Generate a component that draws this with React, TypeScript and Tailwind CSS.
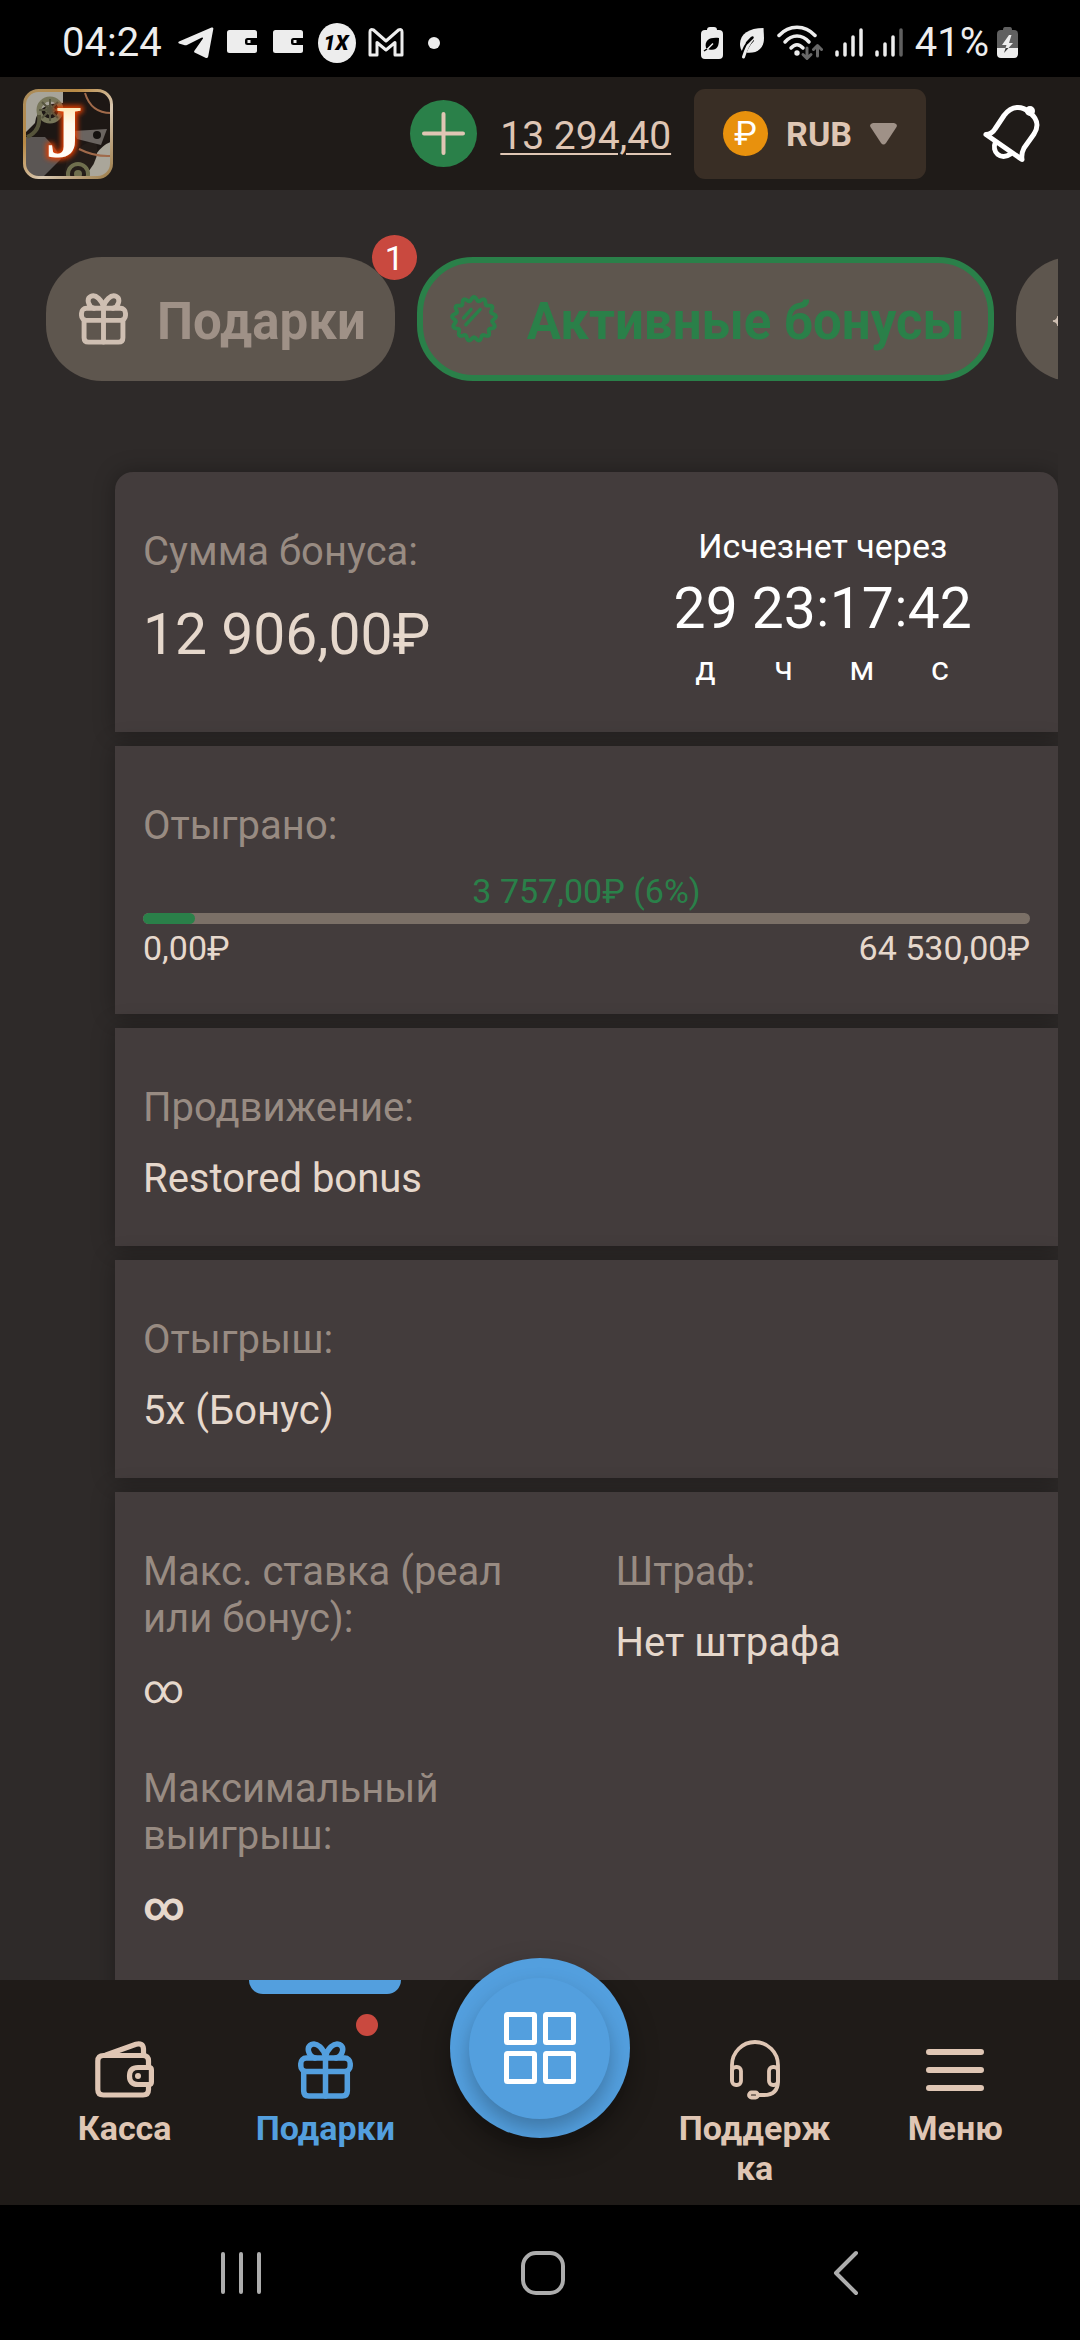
import type { ReactNode } from "react";

function scallopPath(lobes: number, radius: number, depth: number, center: number) {
  const points: string[] = [];
  const steps = 260;
  for (let i = 0; i < steps; i++) {
    const angle = (i / steps) * Math.PI * 2 - Math.PI / 2;
    const r = radius + depth * Math.cos(lobes * (angle + Math.PI / 2));
    points.push(`${(center + r * Math.cos(angle)).toFixed(2)} ${(center + r * Math.sin(angle)).toFixed(2)}`);
  }
  return `M${points.join("L")}Z`;
}

const SCALLOP = scallopPath(13, 21, 2, 25);

function TelegramIcon() {
  return (
    <svg width="36" height="36" viewBox="0 0 36 36" fill="#ededed" aria-hidden="true">
      <path d="M1 16.5 33.5 2.6Q35.6 2 35.3 4L30.2 31.5Q29.5 34 27 32.6L16.6 27.6Q15.6 26.8 16.6 25.6L25 13.6Q25.3 12 23.4 12.8L9 20Q7.6 20.6 6 20L1 18.4Q-.4 17.4 1 16.5Z" />
    </svg>
  );
}

function WalletNoticeIcon() {
  return (
    <svg width="34" height="36" viewBox="0 0 34 36" aria-hidden="true">
      <rect x="1" y="5" width="30" height="23" rx="2.5" fill="#ededed" />
      <rect x="19" y="13" width="15" height="7" rx="2.5" fill="#000" />
      <rect x="21.5" y="15" width="3" height="3" fill="#ededed" />
    </svg>
  );
}

function OneXIcon() {
  return (
    <svg width="38" height="40" viewBox="0 0 38 40" aria-hidden="true">
      <ellipse cx="19" cy="20" rx="19" ry="20" fill="#ededed" />
      <text x="18" y="27" textAnchor="middle" fontFamily="Roboto, sans-serif" fontSize="21" fontWeight="900" fontStyle="italic" fill="#000">
        1X
      </text>
    </svg>
  );
}

function MailIcon() {
  return (
    <svg width="36" height="32" viewBox="0 0 36 32" fill="none" stroke="#ededed" strokeWidth="3" strokeLinejoin="round" aria-hidden="true">
      <path d="M2 28V5Q2 1.500 5.500 3L18 14 30.500 3Q34 1.500 34 5V28H27V15.500L18 23 9 15.500V28Z" />
    </svg>
  );
}

function EcoBatteryIcon() {
  return (
    <svg width="26" height="34" viewBox="0 0 26 34" aria-hidden="true">
      <path d="M6 4Q6 1 9 1H13Q16 1 16 4H18Q22 4 22 8V29Q22 33 18 33H4Q0 33 0 29V8Q0 4 4 4Z" fill="#ededed" />
      <path d="M5 22C3 14 9 11 18 12 18 21 16 25 8 23.500Z" fill="#000" />
      <path d="M3 24.500 6 23.500 12 17.500" stroke="#ededed" strokeWidth="1.500" fill="none" />
      <path d="M3 25 6 23" stroke="#000" strokeWidth="1.500" />
    </svg>
  );
}

function LeafIcon() {
  return (
    <svg width="26" height="34" viewBox="0 0 26 34" aria-hidden="true">
      <path d="M24.500 2C10 2 1 8 1 18 1 21 2 24 3.500 26 16 29 25 24 25 12Z" fill="#ededed" />
      <path d="M13.500 13C8 18 6 23 3 32" stroke="#000" strokeWidth="5" fill="none" />
      <path d="M14 12.500C9 18 7 23 4.500 31" stroke="#ededed" strokeWidth="3" strokeLinecap="round" fill="none" />
      <path d="M8 17 13.500 11.500" stroke="#000" strokeWidth="2.500" strokeLinecap="round" />
    </svg>
  );
}

function WifiIcon() {
  return (
    <svg width="46" height="36" viewBox="0 0 46 36" fill="none" strokeWidth="3.500" strokeLinecap="round" aria-hidden="true">
      <g stroke="#ededed">
        <path d="M2 10.500C12-.5 28-.5 38 10.500" />
        <path d="M8 17C15 9 25 9 32 17" />
        <path d="M14 23C18 18.500 22 18.500 26 23" />
      </g>
      <circle cx="20" cy="28" r="2.700" fill="#ededed" />
      <g stroke="#686868" strokeWidth="3" strokeLinejoin="round">
        <path d="M30 23V33M26 29.500 30 33.500 34 29.500" />
        <path d="M40.500 31V21M36.500 24.500 40.500 20.500 44.500 24.500" />
      </g>
    </svg>
  );
}

function SignalIcon({ weak = false }: { weak?: boolean }) {
  return (
    <svg width="28" height="32" viewBox="0 0 28 32" fill="none" stroke="#ededed" strokeWidth="3.500" strokeLinecap="round" aria-hidden="true">
      <path d="M2 25V28M10 17V28M18 10V28" />
      <path d="M26 3V28" stroke={weak ? "#606060" : "#ededed"} />
    </svg>
  );
}

function ChargingBatteryIcon() {
  return (
    <svg width="22" height="34" viewBox="0 0 22 34" aria-hidden="true">
      <path d="M6 4Q6 1 8 1H13Q15 1 15 4H17Q21 4 21 8V22H0V8Q0 4 4 4Z" fill="#606060" />
      <path d="M0 22H21V28Q21 32 17 32H4Q0 32 0 28Z" fill="#ededed" />
      <path d="M12 9 5 19H9.500L7 27 16 17H12L14.500 9Z" fill="#ededed" />
      <path d="M8.600 22H11.500L7 27Z" fill="#3a3a3a" />
    </svg>
  );
}

function StatusBar() {
  return (
    <div className="flex h-[77px] shrink-0 items-center justify-between bg-black pr-[61px] pl-[62px] pt-2 text-[40px] leading-[48px] text-[#ededed]">
      <div className="flex items-center gap-3">
        <span className="mr-1">04:24</span>
        <TelegramIcon />
        <WalletNoticeIcon />
        <WalletNoticeIcon />
        <OneXIcon />
        <MailIcon />
        <span className="ml-3 size-3 rounded-full bg-[#ededed]" />
      </div>
      <div className="flex items-center gap-3">
        <EcoBatteryIcon />
        <LeafIcon />
        <WifiIcon />
        <SignalIcon />
        <SignalIcon weak />
        <div className="flex items-center gap-2">
          <span>41%</span>
          <ChargingBatteryIcon />
        </div>
      </div>
    </div>
  );
}

function Logo() {
  return (
    <svg width="90" height="90" viewBox="0 0 90 90" role="img" aria-label="J">
      <defs>
        <linearGradient id="logoFrame" x1="0" y1="0" x2="1" y2="1">
          <stop offset="0" stopColor="#a98c5c" />
          <stop offset=".3" stopColor="#b98a45" />
          <stop offset=".6" stopColor="#d8c7b0" />
          <stop offset="1" stopColor="#9c7c48" />
        </linearGradient>
        <linearGradient id="logoLetter" x1="0" y1="0" x2="0" y2="1">
          <stop offset="0" stopColor="#ffd98a" />
          <stop offset=".4" stopColor="#fff8ea" />
          <stop offset="1" stopColor="#fff" />
        </linearGradient>
        <filter id="logoGlow" x="-50%" y="-50%" width="200%" height="200%">
          <feGaussianBlur stdDeviation="2.5" />
        </filter>
        <clipPath id="logoClip">
          <rect x="2" y="2" width="86" height="86" rx="13" />
        </clipPath>
      </defs>
      <g clipPath="url(#logoClip)">
        <rect width="90" height="90" fill="#1d1714" />
        <path d="M0 0H40V14Q14 14 12 34L2 44Z" fill="#a7a49a" />
        <path d="M0 48H22Q34 60 38 70L18 90H0Z" fill="#5b5654" />
        <path d="M90 52Q70 58 64 90H90Z" fill="#aaa69a" />
        <path d="M72 50Q80 70 60 88L40 90 44 70 60 56Z" fill="#241d19" />
        <path d="M50 42 84 40 78 56 54 50Z" fill="#6a6460" />
        <circle cx="74" cy="46" r="4" fill="#15110f" />
        <circle cx="27" cy="21" r="11" fill="none" stroke="#77765a" strokeWidth="5" />
        <circle cx="27" cy="21" r="5" fill="#66654c" />
        <path d="M27 10V32M16 21H38M19 13 35 29M35 13 19 29" stroke="#55543f" strokeWidth="2" />
        <path d="M16 26Q18 42 4 48" stroke="#56543b" strokeWidth="4" fill="none" />
        <circle cx="55" cy="85" r="10" fill="none" stroke="#6f6f4e" strokeWidth="4" />
        <circle cx="55" cy="85" r="4" fill="#6f6f4e" />
        <path d="M62 4Q68 24 88 24M56 60Q72 68 88 67" stroke="#a06a4a" strokeWidth="2" fill="none" />
      </g>
      <g fontFamily="'Liberation Serif', serif" fontWeight="700" fontSize="74" textAnchor="middle">
        <text x="41" y="68" fill="#ff4a08" stroke="#e23c04" strokeWidth="5" filter="url(#logoGlow)" aria-hidden="true">J</text>
        <text x="41" y="68" fill="url(#logoLetter)">J</text>
      </g>
      <rect x="1.500" y="1.500" width="87" height="87" rx="14" fill="none" stroke="url(#logoFrame)" strokeWidth="3" />
    </svg>
  );
}

function BellIcon() {
  return (
    <svg width="60" height="60" viewBox="0 0 60 60" fill="none" stroke="#fff" strokeWidth="5" strokeLinecap="round" strokeLinejoin="round" aria-hidden="true">
      <path d="M5 30.500Q11 30 14 25L23 11.500C31 1 41 2 48 8 57 15 58 22 53 30L43 44Q40 50 41 55.500Z" />
      <path d="M14.500 38C10 48 20 57 29.500 50" />
      <circle cx="49" cy="7" r="2.500" fill="#fff" />
    </svg>
  );
}

function Header() {
  return (
    <header className="flex h-[113px] shrink-0 items-center gap-[23px] bg-[#1f1b18] pr-[39px] pl-[23px]">
      <a href="#home" className="mr-auto">
        <Logo />
      </a>
      <button type="button" aria-label="Пополнить" className="flex size-[67px] items-center justify-center rounded-full bg-[#2a8049]">
        <svg width="43" height="43" viewBox="0 0 43 43" stroke="#dfc6b4" strokeWidth="4" strokeLinecap="round" aria-hidden="true">
          <path d="M21.500 2V41M2 21.500H41" />
        </svg>
      </button>
      <a href="#balance" className="pt-1 text-[39px] leading-[46px] text-[#dfc6b4] underline decoration-2 underline-offset-4">
        13 294,40
      </a>
      <button type="button" className="flex h-[90px] items-center gap-[18px] rounded-[11px] bg-[#392e25] px-[29px]">
        <span className="flex size-[45px] items-center justify-center rounded-full bg-[#e8910d] text-[34px] leading-[45px] text-white">₽</span>
        <span className="text-[34px] leading-[40px] font-bold text-[#dfc6b4]">RUB</span>
        <svg width="27" height="22" viewBox="0 0 27 22" fill="#9f9187" aria-hidden="true">
          <path d="M3 0H24Q28 1 26.500 4L16 20Q13.500 23 11 20L.5 4Q-1 1 3 0Z" />
        </svg>
      </button>
      <button type="button" aria-label="Уведомления" className="ml-8">
        <BellIcon />
      </button>
    </header>
  );
}

function GiftIcon({ className }: { className: string }) {
  return (
    <svg className={className} viewBox="0 0 55 58" fill="none" stroke="currentColor" strokeWidth="5.500" strokeLinecap="round" strokeLinejoin="round" aria-hidden="true">
      <rect x="2.800" y="17" width="49.400" height="13.500" rx="5.500" />
      <path d="M5.700 31V50Q5.700 55 10.700 55H44.300Q49.300 55 49.300 50V31" />
      <path d="M27.500 17V55" />
      <path d="M27.500 16C26 8 19 1 13.500 3.500 8 6 10 15 17 17M27.500 16C29 8 36 1 41.500 3.500 47 6 45 15 38 17" />
    </svg>
  );
}

function BonusIcon() {
  return (
    <svg width="48" height="48" viewBox="0 0 50 50" fill="none" stroke="currentColor" strokeWidth="4" strokeLinecap="round" strokeLinejoin="round" aria-hidden="true">
      <path d={SCALLOP} />
      <path d="M14 24 22 15M16.500 31 31.500 15" strokeWidth="3.500" />
    </svg>
  );
}

function SparkleIcon() {
  return (
    <svg width="49" height="48" viewBox="0 0 49 48" fill="#cfbfb2" aria-hidden="true">
      <path d="M4 26Q8.500 25.500 9 21 9.500 25.500 14 26 9.500 26.500 9 31 8.500 26.500 4 26Z" stroke="#cfbfb2" strokeWidth="1.500" />
    </svg>
  );
}

function Tabs() {
  return (
    <nav className="mr-[22px] flex gap-[22px] overflow-hidden pt-[67px] pl-[46px] text-[51px] leading-[60px] font-bold text-[#9f9187]">
      <button type="button" className="relative flex h-[124px] shrink-0 items-center gap-[29px] rounded-[56px] bg-[#5e564e] pr-[29px] pl-[33px]">
        <GiftIcon className="h-[52px] w-[49px] text-[#cfbfb2]" />
        <span className="pt-1.5">Подарки</span>
        <span className="absolute -top-[22px] -right-[22px] flex size-[45px] items-center justify-center rounded-full bg-[#c9493f] text-[34px] leading-[40px] font-normal text-white">
          1
        </span>
      </button>
      <button type="button" className="flex h-[124px] shrink-0 items-center gap-[29px] rounded-[56px] border-[6px] border-[#2a8049] bg-[#5e564e] pr-[23px] pl-[27px] text-[#2a8049]">
        <BonusIcon />
        <span className="pt-1.5">Активные бонусы</span>
      </button>
      <button type="button" aria-label="Ещё" className="flex h-[124px] w-[300px] shrink-0 items-center rounded-[56px] bg-[#5e564e] px-[33px]">
        <SparkleIcon />
      </button>
    </nav>
  );
}

function Card({ children, className = "" }: { children: ReactNode; className?: string }) {
  return <section className={`bg-[#433c3c] px-7 pt-14 pb-11 shadow-[0_0_22px_rgba(0,0,0,0.3)] ${className}`}>{children}</section>;
}

function Field({ label, value, bold = false }: { label: string; value: string; bold?: boolean }) {
  return (
    <div>
      <dt className="text-[40px] leading-[47px] text-[#988b82]">{label}</dt>
      <dd className={`mt-6 text-[40px] leading-[47px] text-[#e6d8cc] ${bold ? "font-bold" : ""}`}>{value}</dd>
    </div>
  );
}

const timer = [
  { value: "29", unit: "д", separator: "" },
  { value: "23", unit: "ч", separator: ":" },
  { value: "17", unit: "м", separator: ":" },
  { value: "42", unit: "с", separator: "" },
];

function Timer() {
  return (
    <div className="flex flex-col items-center text-white">
      <p className="text-[34px] leading-[36px]">Исчезнет через</p>
      <div className="mt-3 flex">
        {timer.map((part) => (
          <div key={part.unit} className={`flex ${part.unit === "д" ? "mr-[14px]" : ""}`}>
            <div className="flex flex-col items-center gap-1.5">
              <span className="text-[57px] leading-[66px]">{part.value}</span>
              <span className="text-[34px] leading-[40px]">{part.unit}</span>
            </div>
            {part.separator && <span className="w-[14px] text-center text-[51px] leading-[66px]">{part.separator}</span>}
          </div>
        ))}
      </div>
    </div>
  );
}

function BonusCards() {
  return (
    <div className="mt-[91px] mr-[22px] flex flex-col gap-[14px] [clip-path:inset(-40px_0_-40px_-40px)] ml-[115px]">
      <Card className="grid grid-cols-2 gap-x-[58px] rounded-t-[18px]">
        <dl>
          <dt className="text-[40px] leading-[47px] text-[#988b82]">Сумма бонуса:</dt>
          <dd className="mt-6 text-[57px] leading-[72px] text-[#e6d8cc]">12 906,00₽</dd>
        </dl>
        <Timer />
      </Card>
      <Card className="pb-[46px]">
        <p id="wagered" className="text-[40px] leading-[47px] text-[#988b82]">Отыграно:</p>
        <div className="mt-[22px] text-[34px] leading-[40px]">
          <p className="text-center text-[#2a8049]">3 757,00₽ (6%)</p>
          <div role="progressbar" aria-labelledby="wagered" aria-valuenow={6} className="mt-0.5 h-[11px] overflow-hidden rounded-full bg-[#7b7067]">
            <div className="h-full rounded-full bg-[#2a8049]" style={{ width: `${(3757 / 64530) * 100}%` }} />
          </div>
          <div className="mt-1 flex justify-between text-[#e6d8cc]">
            <span>0,00₽</span>
            <span>64 530,00₽</span>
          </div>
        </div>
      </Card>
      <Card>
        <dl>
          <Field label="Продвижение:" value="Restored bonus" />
        </dl>
      </Card>
      <Card>
        <dl>
          <Field label="Отыгрыш:" value="5x (Бонус)" />
        </dl>
      </Card>
      <Card className="min-h-[520px]">
        <dl className="grid grid-cols-2 gap-x-[58px] gap-y-[52px]">
          <Field label="Макс. ставка (реал или бонус):" value="∞" />
          <Field label="Штраф:" value="Нет штрафа" />
          <Field label="Максимальный выигрыш:" value="∞" bold />
        </dl>
      </Card>
    </div>
  );
}

function WalletIcon() {
  return (
    <svg width="59" height="58" viewBox="0 0 59 58" fill="none" stroke="currentColor" strokeWidth="5.200" strokeLinecap="round" strokeLinejoin="round" aria-hidden="true">
      <path d="M53.500 26V20Q53.500 14.500 48 14.500H8.500Q2.800 14.500 2.800 20V48.500Q2.800 54 8.500 54H48Q53.500 54 53.500 48.500V45" />
      <path d="M11 14 41 3.200Q48 1.500 48.500 8V14" />
      <path d="M43 26.500H54Q56.400 26.500 56.400 29V41Q56.400 43.500 54 43.500H43Q34.500 43.500 34.500 35 34.500 26.500 43 26.500Z" />
      <circle cx="43" cy="35" r="3" fill="currentColor" stroke="none" />
    </svg>
  );
}

function HeadsetIcon() {
  return (
    <svg width="50" height="60" viewBox="0 0 50 60" fill="none" stroke="currentColor" strokeWidth="3.800" strokeLinecap="round" strokeLinejoin="round" aria-hidden="true">
      <path d="M2 40V25A23 23 0 0 1 48 25V41Q48 55 34 55H28" />
      <rect x="2" y="27" width="9" height="18" rx="4" />
      <rect x="39" y="27" width="9" height="18" rx="4" />
      <rect x="19" y="52.500" width="9" height="5" rx="2.500" />
    </svg>
  );
}

function MenuIcon() {
  return (
    <svg width="58" height="60" viewBox="0 0 58 60" stroke="currentColor" strokeWidth="6" strokeLinecap="round" aria-hidden="true">
      <path d="M3 12H55M3 30H55M3 48H55" />
    </svg>
  );
}

function NavItem({ icon, label, active = false, badge = false }: { icon: ReactNode; label: string; active?: boolean; badge?: boolean }) {
  return (
    <a
      href="#nav"
      aria-current={active ? "page" : undefined}
      className={`relative flex w-[152px] flex-col items-center pt-[60px] text-center text-[34px] leading-[40px] font-bold ${active ? "text-[#539fde]" : "text-[#dfc6b4]"}`}
    >
      {active && <span className="absolute top-0 h-[14px] w-full rounded-b-[14px] bg-[#539fde]" />}
      {badge && <span className="absolute top-[34px] right-[23px] size-[22px] rounded-full bg-[#c9493f]" />}
      <span className="flex h-[60px] items-center">{icon}</span>
      <span className="mt-2 w-full break-words">{label}</span>
    </a>
  );
}

function BottomNav() {
  return (
    <nav className="relative flex h-[225px] shrink-0 justify-evenly bg-[#1f1b18]">
      <NavItem icon={<WalletIcon />} label="Касса" />
      <NavItem icon={<GiftIcon className="h-[58px] w-[55px]" />} label="Подарки" active badge />
      <button
        type="button"
        aria-label="Игры"
        className="-mt-[22px] flex size-[180px] items-center justify-center rounded-full bg-[#539fde] shadow-[0_12px_28px_rgba(0,0,0,0.35)]"
      >
        <span className="flex size-[141px] items-center justify-center rounded-full bg-[#539fde] shadow-[0_10px_20px_rgba(0,0,0,0.25)]">
          <svg width="72" height="72" viewBox="0 0 72 72" fill="none" stroke="#fff" strokeWidth="5" strokeLinejoin="round" aria-hidden="true">
            <rect x="2.500" y="2.500" width="28" height="28" rx="1" />
            <rect x="41.500" y="2.500" width="28" height="28" rx="1" />
            <rect x="2.500" y="41.500" width="28" height="28" rx="1" />
            <rect x="41.500" y="41.500" width="28" height="28" rx="1" />
          </svg>
        </span>
      </button>
      <NavItem icon={<HeadsetIcon />} label="Поддержка" />
      <NavItem icon={<MenuIcon />} label="Меню" />
    </nav>
  );
}

function SystemNav() {
  return (
    <div className="grid h-[135px] shrink-0 grid-cols-3 items-center justify-items-center bg-black pr-[83px] pl-[90px]">
      <button type="button" aria-label="Недавние">
        <svg width="44" height="46" viewBox="0 0 44 46" stroke="#adadad" strokeWidth="4" strokeLinecap="round">
          <path d="M4 4V42M22 4V42M40 4V42" />
        </svg>
      </button>
      <button type="button" aria-label="Домой">
        <svg width="46" height="46" viewBox="0 0 46 46" fill="none" stroke="#adadad" strokeWidth="4">
          <rect x="3" y="3" width="40" height="40" rx="13" />
        </svg>
      </button>
      <button type="button" aria-label="Назад">
        <svg width="28" height="46" viewBox="0 0 28 46" fill="none" stroke="#adadad" strokeWidth="4" strokeLinecap="round" strokeLinejoin="round">
          <path d="M24 3 4 23 24 43" />
        </svg>
      </button>
    </div>
  );
}

export default function App() {
  return (
    <div className="flex h-screen flex-col bg-[#2e2a29] font-[Roboto,sans-serif]">
      <StatusBar />
      <Header />
      <main className="min-h-0 flex-1 overflow-hidden">
        <Tabs />
        <BonusCards />
      </main>
      <BottomNav />
      <SystemNav />
    </div>
  );
}
